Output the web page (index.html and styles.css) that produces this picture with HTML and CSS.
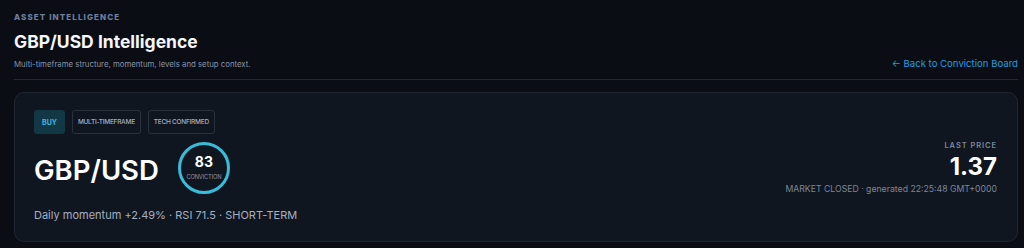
FILE: index.html
```html
<!DOCTYPE html>
<html lang="en">
<head>
<meta charset="utf-8">
<title>GBP/USD Intelligence</title>
<link rel="stylesheet" href="styles.css">
</head>
<body>
<div class="page">
  <header class="head">
    <div class="head-text">
      <div class="eyebrow">ASSET INTELLIGENCE</div>
      <h1 class="title">GBP/USD Intelligence</h1>
      <p class="subtitle">Multi-timeframe structure, momentum, levels and setup context.</p>
    </div>
    <a class="back" href="#">← Back to Conviction Board</a>
  </header>

  <section class="card">
    <div class="left">
      <div class="tags">
        <span class="tag tag-buy">BUY</span>
        <span class="tag">MULTI-TIMEFRAME</span>
        <span class="tag">TECH CONFIRMED</span>
      </div>
      <div class="name-row">
        <div class="pair">GBP/USD</div>
        <div class="ring">
          <span class="ring-num">83</span>
          <span class="ring-label">CONVICTION</span>
        </div>
      </div>
      <div class="meta">Daily momentum +2.49% · RSI 71.5 · SHORT-TERM</div>
    </div>
    <div class="right">
      <div class="price-label">LAST PRICE</div>
      <div class="price">1.37</div>
      <div class="status">MARKET CLOSED · generated 22:25:48 GMT+0000</div>
    </div>
  </section>
</div>
</body>
</html>
```

FILE: styles.css
```css
* { box-sizing: border-box; }
html, body {
  margin: 0;
  padding: 0;
  background: #0a0d14;
  font-family: Inter, "Noto Sans", "Liberation Sans", sans-serif;
  color: #e6ebf2;
}
.page {
  padding: 12px 6px 0 14px;
}
.head {
  display: flex;
  justify-content: space-between;
  align-items: flex-end;
  border-bottom: 1px solid #222833;
  padding-bottom: 9px;
}
.eyebrow {
  font-size: 8px;
  font-weight: 800;
  letter-spacing: 1.1px;
  color: #6e7f9e;
  line-height: 11px;
}
.title {
  margin: 8px 0 0;
  font-size: 17.5px;
  font-weight: 700;
  line-height: 22px;
  color: #f4f6fa;
}
.subtitle {
  margin: 6px 0 0;
  font-size: 7.8px;
  line-height: 11px;
  color: #8792a6;
}
.back {
  font-size: 9.6px;
  color: #1f9fe0;
  text-decoration: none;
  line-height: 12px;
  margin-bottom: 0;
}
.card {
  margin-top: 12px;
  height: 150px;
  border: 1px solid #1f2732;
  border-radius: 10px;
  background: #10161f;
  padding: 17px 20px 0 19px;
  display: flex;
  justify-content: space-between;
  align-items: flex-start;
}
.tags {
  display: flex;
  gap: 7px;
}
.tag {
  height: 24px;
  display: flex;
  align-items: center;
  padding: 0 5px;
  border: 1px solid #29313d;
  border-radius: 3px;
  font-size: 6.5px;
  font-weight: 500;
  letter-spacing: -0.25px;
  color: #a4afc2;
}
.tag-buy {
  background: #133845;
  border-color: #133845;
  color: #3cb9e2;
  font-weight: 700;
  font-size: 7px;
  letter-spacing: 0;
  padding: 0 7px;
}
.name-row {
  display: flex;
  align-items: center;
  gap: 19px;
  margin-top: 8px;
}
.pair {
  font-size: 27.5px;
  font-weight: 600;
  color: #ffffff;
  line-height: 30px;
  margin-top: 3px;
}
.ring {
  width: 52px;
  height: 52px;
  border: 3px solid #39bcd8;
  border-radius: 50%;
  display: flex;
  flex-direction: column;
  align-items: center;
  justify-content: center;
}
.ring-num {
  font-size: 14px;
  font-weight: 700;
  color: #ffffff;
  line-height: 16px;
  margin-top: -2px;
}
.ring-label {
  font-size: 5.8px;
  color: #8a95a8;
  line-height: 8px;
  margin-top: 3px;
  letter-spacing: -0.2px;
}
.meta {
  margin-top: 13px;
  font-size: 11px;
  line-height: 16px;
  color: #a4b0c2;
}
.right {
  align-self: center;
  margin-top: -16px;
  display: flex;
  flex-direction: column;
  align-items: flex-end;
}
.price-label {
  font-size: 7.4px;
  letter-spacing: 1px;
  font-weight: 600;
  color: #7d889b;
  line-height: 10px;
}
.price {
  font-size: 24px;
  font-weight: 700;
  color: #ffffff;
  line-height: 24px;
  margin-top: 4px;
}
.status {
  font-size: 8.7px;
  color: #7c8698;
  line-height: 12px;
  margin-top: 4px;
}
```
